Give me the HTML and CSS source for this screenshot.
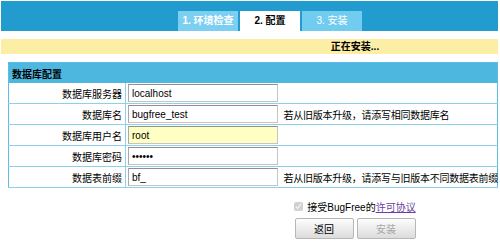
FILE: index.html
```html
<!DOCTYPE html>
<html lang="zh-CN">
<head>
<meta charset="utf-8">
<title>BugFree 安装</title>
<link rel="stylesheet" href="styles.css">
</head>
<body>
<div class="page">
  <div class="topbar">
    <ul class="tabs">
      <li class="tab tab-done">1. 环境检查</li>
      <li class="tab tab-current">2. 配置</li>
      <li class="tab tab-next">3. 安装</li>
    </ul>
  </div>
  <div class="notice">正在安装...</div>
  <table class="form">
    <colgroup>
      <col class="col-label">
      <col class="col-field">
      <col>
    </colgroup>
    <thead>
      <tr><th colspan="3">数据库配置</th></tr>
    </thead>
    <tbody>
      <tr>
        <td class="label">数据库服务器</td>
        <td class="field"><input class="text" type="text" value="localhost"></td>
        <td class="hint"></td>
      </tr>
      <tr>
        <td class="label">数据库名</td>
        <td class="field"><input class="text" type="text" value="bugfree_test"></td>
        <td class="hint">若从旧版本升级，请添写相同数据库名</td>
      </tr>
      <tr>
        <td class="label">数据库用户名</td>
        <td class="field"><input class="text text-focus" type="text" value="root"></td>
        <td class="hint"></td>
      </tr>
      <tr>
        <td class="label">数据库密码</td>
        <td class="field"><input class="text" type="password" value="123456"></td>
        <td class="hint"></td>
      </tr>
      <tr>
        <td class="label">数据表前缀</td>
        <td class="field"><input class="text" type="text" value="bf_"></td>
        <td class="hint">若从旧版本升级，请添写与旧版本不同数据表前缀</td>
      </tr>
    </tbody>
  </table>
  <div class="actions">
    <label class="agree"><input class="check" type="checkbox" checked disabled>接受BugFree的<a class="license" href="#">许可协议</a></label>
    <div class="buttons">
      <button class="btn" type="button">返回</button>
      <button class="btn" type="button" disabled>安装</button>
    </div>
  </div>
</div>
</body>
</html>
```
FILE: styles.css
```css
html, body {
  margin: 0;
  padding: 0;
  background: #fff;
}
body {
  font-family: "Liberation Sans", "Noto Sans CJK SC", sans-serif;
  font-size: 10px;
  color: #000;
}
.page {
  width: 497px;
  margin: 1px 0 0 1px;
}
.topbar {
  height: 30px;
  background: #229bcf;
  display: flex;
  align-items: flex-end;
}
.tabs {
  list-style: none;
  margin: 0 0 0 177px;
  padding: 0;
  display: flex;
  gap: 2px;
}
.tab {
  width: 60px;
  height: 20px;
  line-height: 20px;
  text-align: center;
}
.tab-done {
  background: #7ccff1;
  color: #fff;
  font-weight: bold;
}
.tab-current {
  background: #fff;
  color: #000;
  font-weight: bold;
}
.tab-next {
  background: #72ccf0;
  color: #fff;
}
.notice {
  margin-top: 8px;
  height: 15px;
  line-height: 15px;
  background: #fdeea6;
  padding-left: 211px;
  text-align: center;
  font-weight: bold;
}
.form {
  margin: 8px 0 0 7px;
  width: 490px;
  table-layout: fixed;
  border-collapse: collapse;
  border: 1px solid #5bbde4;
}
.col-label {
  width: 117px;
}
.col-field {
  width: 154px;
}
.form th {
  background: #4eb7e0;
  height: 20px;
  padding: 0 0 0 3px;
  text-align: left;
  font-weight: bold;
}
.form td {
  height: 20px;
  padding: 0;
  border-bottom: 1px solid #8dd0ec;
}
.form td.label {
  text-align: right;
  padding-right: 3px;
  border-right: 1px solid #8dd0ec;
}
.form td.field {
  padding-left: 2px;
}
.form td.hint {
  padding-left: 4px;
  white-space: nowrap;
  letter-spacing: -0.25px;
}
.text {
  display: block;
  box-sizing: border-box;
  width: 150px;
  height: 18px;
  margin: 0;
  padding: 0 3px;
  border: 1px solid #c4c4c4;
  border-top-color: #8f8f8f;
  border-left-color: #a8a8a8;
  font-family: "Liberation Sans", "Noto Sans CJK SC", sans-serif;
  font-size: 10px;
  color: #000;
  background: #fff;
}
.text-focus {
  background: #ffffc4;
}
.actions {
  padding-left: 211px;
  text-align: center;
}
.agree {
  display: inline-flex;
  align-items: center;
  margin-top: 11px;
  height: 14px;
}
.check {
  width: 9px;
  height: 9px;
  margin: 0 4px 0 0;
}
.license {
  color: #6a3fa0;
  text-decoration: underline;
}
.buttons {
  margin-top: 5px;
  display: flex;
  justify-content: center;
  gap: 3px;
}
.btn {
  width: 59px;
  height: 21px;
  padding: 0;
  border: 1px solid #b7b7b7;
  border-radius: 2px;
  background: linear-gradient(#fdfdfd, #dcdcdc);
  font-family: "Liberation Sans", "Noto Sans CJK SC", sans-serif;
  font-size: 10px;
  color: #000;
}
.btn:disabled {
  color: #a8a8a8;
}
```
